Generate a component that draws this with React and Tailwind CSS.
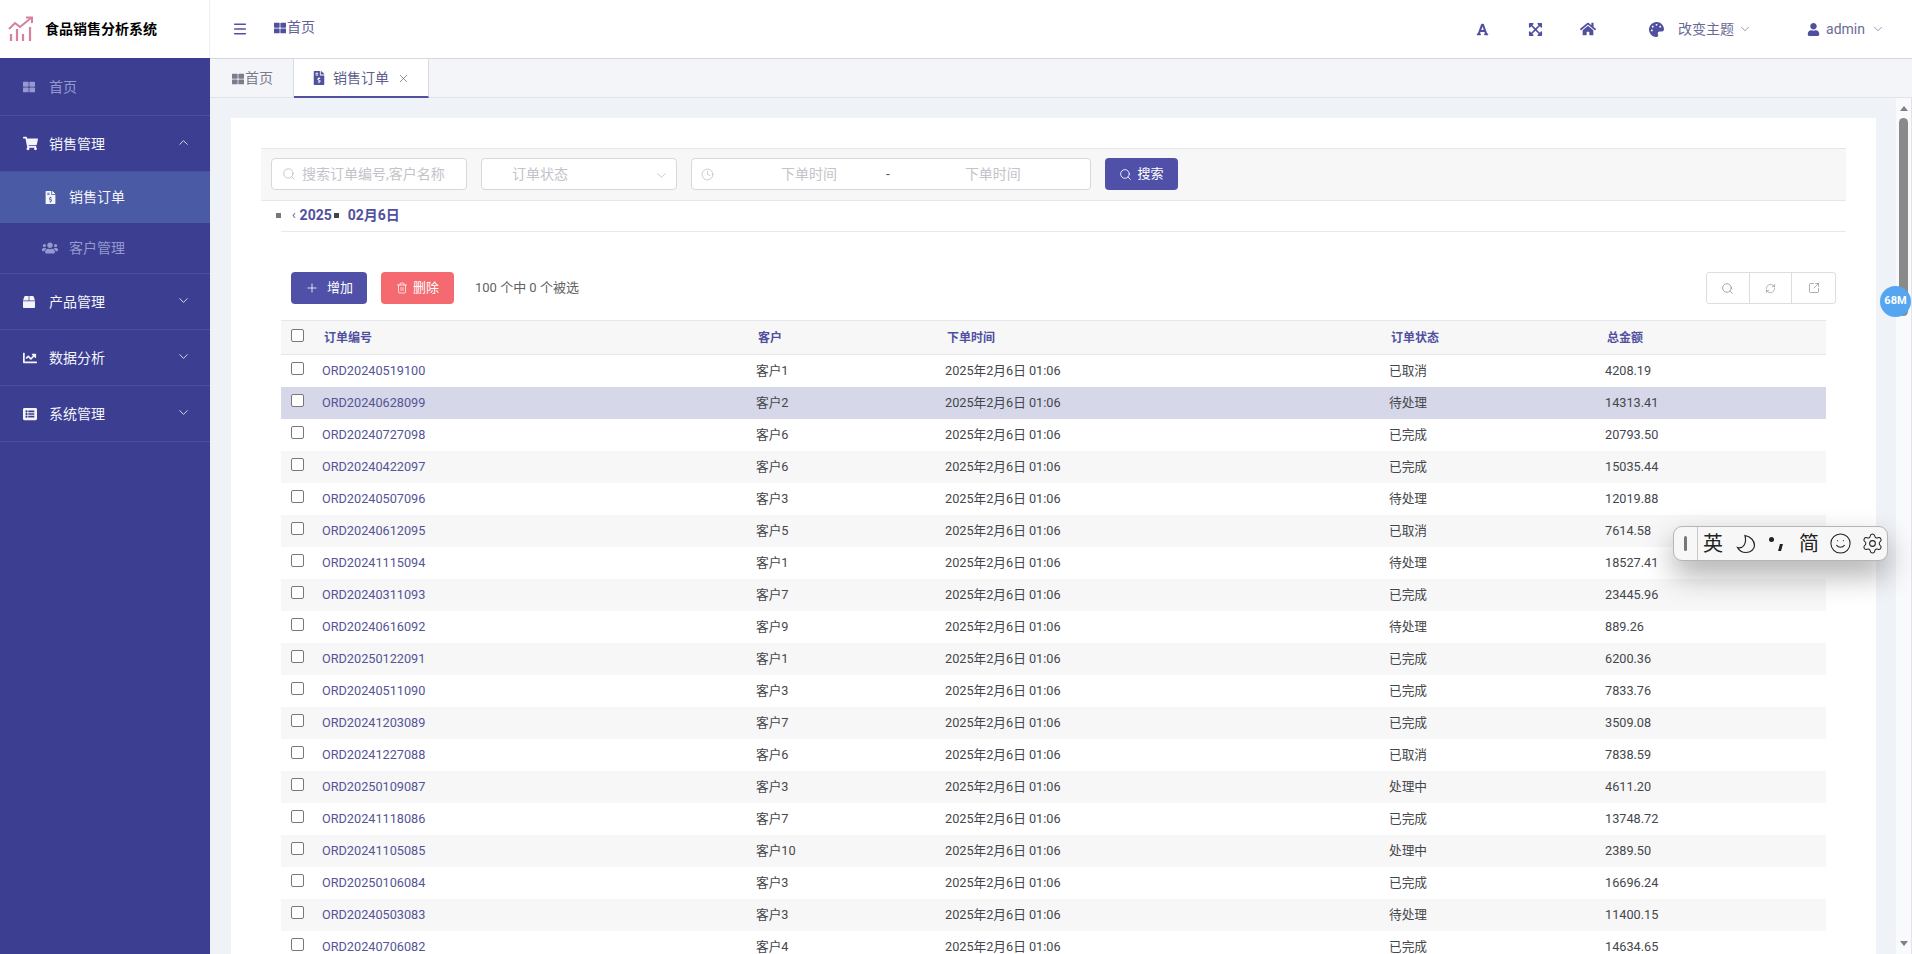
import React from "react";
import { FaThLarge, FaShoppingCart, FaFileInvoiceDollar, FaUsers, FaBox, FaChartLine, FaListAlt, FaFont, FaExpandArrowsAlt, FaHome, FaPalette, FaUser } from "react-icons/fa";
import { ChevronDown, ChevronUp, Search, Clock, X, Plus, Trash2, RefreshCw, SquareArrowOutUpRight, Menu, Smile, Settings } from "lucide-react";

const rows = [
  ["ORD20240519100", "客户1", "已取消", "4208.19"],
  ["ORD20240628099", "客户2", "待处理", "14313.41"],
  ["ORD20240727098", "客户6", "已完成", "20793.50"],
  ["ORD20240422097", "客户6", "已完成", "15035.44"],
  ["ORD20240507096", "客户3", "待处理", "12019.88"],
  ["ORD20240612095", "客户5", "已取消", "7614.58"],
  ["ORD20241115094", "客户1", "待处理", "18527.41"],
  ["ORD20240311093", "客户7", "已完成", "23445.96"],
  ["ORD20240616092", "客户9", "待处理", "889.26"],
  ["ORD20250122091", "客户1", "已完成", "6200.36"],
  ["ORD20240511090", "客户3", "已完成", "7833.76"],
  ["ORD20241203089", "客户7", "已完成", "3509.08"],
  ["ORD20241227088", "客户6", "已取消", "7838.59"],
  ["ORD20250109087", "客户3", "处理中", "4611.20"],
  ["ORD20241118086", "客户7", "已完成", "13748.72"],
  ["ORD20241105085", "客户10", "处理中", "2389.50"],
  ["ORD20250106084", "客户3", "已完成", "16696.24"],
  ["ORD20240503083", "客户3", "待处理", "11400.15"],
  ["ORD20240706082", "客户4", "已完成", "14634.65"],
];

const font = "font-['Roboto','Noto_Sans_CJK_SC',sans-serif]";

function Logo() {
  return (
    <svg width="26" height="26" viewBox="0 0 26 26" fill="none" stroke="#d77f9f" strokeWidth="2">
      <path d="M1 13 L7 7 L12 11 L23 2" />
      <path d="M18 1.5 H24 V7" />
      <path d="M3 25 V18 M9 25 V13 M15 25 V18 M22 25 V11" strokeWidth="2.2" />
    </svg>
  );
}

function SideItem({ icon: Icon, label, open, bright, iconSize = 14, hasArrow = true, h = "h-[56px]" }) {
  return (
    <div className={`${h} flex items-center pl-[23px] pr-[19px] border-b border-[#4b4fa3] ${bright ? "text-[#f4f4fb]" : "text-[#9699cf]"}`}>
      <span className="w-[26px] flex-none flex items-center">
        <Icon size={iconSize} />
      </span>
      <span className="text-[14px] flex-1 pt-[2px]">{label}</span>
      {hasArrow && (open ? <ChevronUp size={15} strokeWidth={1.6} className="text-[#d5d6ee] -mt-[2px]" /> : <ChevronDown size={15} strokeWidth={1.6} className="text-[#d5d6ee] -mt-[2px]" />)}
    </div>
  );
}

function Sidebar() {
  return (
    <aside className="w-[210px] flex-none flex flex-col">
      <div className="h-[58px] flex-none bg-white flex items-center pl-[8px] border-r border-[#eeeeee]">
        <Logo />
        <span className="ml-[11px] text-[14px] font-bold text-black">食品销售分析系统</span>
      </div>
      <nav className="flex-1 bg-[#3c3e92]">
        <SideItem icon={FaThLarge} label="首页" hasArrow={false} iconSize={12} h="h-[58px]" />
        <SideItem icon={FaShoppingCart} label="销售管理" open bright iconSize={15} />
        <div className="h-[51px] bg-[#4a5aa5] pl-[44px] flex items-center text-[#f4f4fb]">
          <FaFileInvoiceDollar size={13} />
          <span className="ml-[12px] text-[14px]">销售订单</span>
        </div>
        <div className="h-[51px] pl-[42px] flex items-center text-[#9699cf] border-b border-[#4b4fa3]">
          <FaUsers size={16} />
          <span className="ml-[11px] text-[14px]">客户管理</span>
        </div>
        <SideItem icon={FaBox} label="产品管理" bright iconSize={12} />
        <SideItem icon={FaChartLine} label="数据分析" bright />
        <SideItem icon={FaListAlt} label="系统管理" bright />
      </nav>
    </aside>
  );
}

function Header() {
  return (
    <header className="h-[59px] flex-none bg-white border-b border-[#d6d8e0] flex items-center text-[#50509f]">
      <Menu size={16} className="ml-[22px]" strokeWidth={2.2} />
      <div className="ml-[26px] flex items-center -mt-[3px]">
        <FaThLarge size={12} />
        <span className="ml-[1px] text-[14px] text-[#62629a]">首页</span>
      </div>
      <div className="ml-auto flex items-center">
        <FaFont size={13} />
        <FaExpandArrowsAlt size={15} className="ml-[39px]" />
        <FaHome size={16} className="ml-[37px]" />
        <FaPalette size={15} className="ml-[53px]" />
        <span className="ml-[14px] text-[14px] text-[#6a6a96]">改变主题</span>
        <ChevronDown size={14} strokeWidth={1.2} className="ml-[4px] text-[#6a6a96]" />
        <FaUser size={13} className="ml-[55px]" />
        <span className="ml-[6px] text-[14px] text-[#6a6a96]">admin</span>
        <ChevronDown size={14} strokeWidth={1.2} className="ml-[6px] mr-[27px] text-[#6a6a96]" />
      </div>
    </header>
  );
}

function Tabs() {
  return (
    <div className="h-[39px] flex-none bg-[#f3f5f9] border-b border-[#e0e4ea] flex">
      <div className="w-[84px] flex items-center pl-[22px] pt-[1px] text-[#7c7c8c] border-r border-[#d8dbe4]">
        <FaThLarge size={12} />
        <span className="ml-[1px] text-[14px]">首页</span>
      </div>
      <div className="w-[135px] h-[39px] bg-white flex items-center pl-[18px] pt-[1px] border-r border-b-2 border-r-[#d8dbe4] border-b-[#50509f] text-[#50509f]">
        <FaFileInvoiceDollar size={14} />
        <span className="ml-[7px] text-[14px] text-[#5d5d8e]">销售订单</span>
        <X size={13} strokeWidth={1.2} className="ml-[8px] text-[#55556a]" />
      </div>
    </div>
  );
}

function Field({ w, children }) {
  return <div className={`${w} h-[32px] bg-white border border-[#d6d8dd] rounded-[4px] flex items-center text-[14px] text-[#c2c4c9]`}>{children}</div>;
}

function Toolbar() {
  return (
    <div className="h-[53px] border-y border-[#e6e7ea] bg-[#f7f7f8] flex items-center pl-[10px] pb-[1px] gap-[14px]">
      <Field w="w-[196px]">
        <Search size={14} strokeWidth={1.3} className="ml-[10px] text-[#b5b7bd]" />
        <span className="ml-[6px]">搜索订单编号,客户名称</span>
      </Field>
      <Field w="w-[196px]">
        <span className="ml-[30px]">订单状态</span>
        <ChevronDown size={15} strokeWidth={1.2} className="ml-auto mr-[7px] mt-[3px] text-[#b5b7bd]" />
      </Field>
      <Field w="w-[400px]">
        <Clock size={13} strokeWidth={1.3} className="ml-[9px] text-[#b5b7bd]" />
        <span className="ml-[67px]">下单时间</span>
        <span className="ml-[49px] text-[#606266]">-</span>
        <span className="ml-[75px]">下单时间</span>
      </Field>
      <button className="w-[73px] h-[32px] rounded-[4px] bg-[#5050a8] text-white text-[13px] flex items-center justify-center">
        <Search size={13} strokeWidth={1.6} />
        <span className="ml-[5px]">搜索</span>
      </button>
    </div>
  );
}

function Crumbs() {
  return (
    <div className="relative h-[31px] ml-[20px] border-b border-[#e8e9ec] flex items-center pb-[2px]">
      <span className="w-[5px] h-[5px] -ml-[5px] bg-[#77777d]" />
      <span className="ml-[11px] text-[12px] text-[#50509f]">‹</span>
      <span className="ml-[4px] text-[14px] font-bold text-[#50509f]">2025</span>
      <span className="ml-[2px] w-[5px] h-[5px] bg-[#444]" />
      <span className="ml-[9px] text-[14px] font-bold text-[#50509f]">02月6日</span>
    </div>
  );
}

function Actions() {
  return (
    <div className="mt-[40px] pl-[30px] pr-[10px] flex items-center">
      <button className="w-[76px] h-[32px] rounded-[4px] bg-[#5050a8] text-white text-[13px] flex items-center justify-center">
        <Plus size={14} strokeWidth={1.4} />
        <span className="ml-[8px]">增加</span>
      </button>
      <button className="ml-[14px] w-[73px] h-[32px] rounded-[4px] bg-[#f46a70] text-white text-[13px] flex items-center justify-center">
        <Trash2 size={12} strokeWidth={1.5} />
        <span className="ml-[5px]">删除</span>
      </button>
      <span className="ml-[21px] text-[13px] text-[#606266]">100 个中 0 个被选</span>
      <div className="ml-auto w-[130px] h-[32px] border border-[#dcdee3] rounded-[3px] grid grid-cols-3 divide-x divide-[#dcdee3] text-[#77797f]">
        <span className="flex items-center justify-center"><Search size={13} strokeWidth={1.2} /></span>
        <span className="flex items-center justify-center"><RefreshCw size={11} strokeWidth={1.2} /></span>
        <span className="flex items-center justify-center"><SquareArrowOutUpRight size={12} strokeWidth={1.2} /></span>
      </div>
    </div>
  );
}

function Check() {
  return <span className="block w-[13px] h-[13px] bg-white border border-[#77777d] rounded-[2px]" />;
}

function Table() {
  const th = "text-left font-bold text-[12px] text-[#50509f] pl-[10px] pr-[8px]";
  const td = "px-[8px] text-[12.7px] text-[#44464c] truncate";
  return (
    <table className="mt-[16px] ml-[20px] w-[1545px] table-fixed border-collapse">
      <colgroup>
        <col className="w-[33px]" />
        <col className="w-[434px]" />
        <col className="w-[189px]" />
        <col className="w-[444px]" />
        <col className="w-[216px]" />
        <col className="w-[229px]" />
      </colgroup>
      <thead>
        <tr className="h-[34px] bg-[#f7f7f8] border-y border-[#e6e7ea]">
          <th className="pl-[10px] pb-[4px]"><Check /></th>
          <th className={th}>订单编号</th>
          <th className={th}>客户</th>
          <th className={th}>下单时间</th>
          <th className={th}>订单状态</th>
          <th className={th}>总金额</th>
        </tr>
      </thead>
      <tbody>
        {rows.map((r, i) => (
          <tr key={r[0]} className={`h-[32px] ${i === 1 ? "bg-[#d6d7e8]" : i % 2 === 1 ? "bg-[#f7f7f8]" : "bg-white"}`}>
            <td className="pl-[10px] pb-[5px]"><Check /></td>
            <td className="px-[8px] text-[12.7px] text-[#545496]">{r[0]}</td>
            <td className={td}>{r[1]}</td>
            <td className={td}>2025年2月6日 01:06</td>
            <td className={td}>{r[2]}</td>
            <td className={td}>{r[3]}</td>
          </tr>
        ))}
      </tbody>
    </table>
  );
}

function Scrollbar() {
  return (
    <div className="w-[16px] flex-none bg-[#f9fafc] border-r border-[#e4e4e8] flex flex-col items-center overflow-hidden">
      <span className="mt-[8px] w-0 h-0 border-x-[4px] border-x-transparent border-b-[5px] border-b-[#808080]" />
      <span className="mt-[7px] w-[9px] h-[198px] rounded-full bg-[#8a8a8a]" />
      <span className="mt-auto mb-[8px] w-0 h-0 border-x-[4px] border-x-transparent border-t-[5px] border-t-[#808080]" />
    </div>
  );
}

function Ime() {
  return (
    <div className={`absolute left-[1673px] top-[526px] w-[215px] h-[35px] bg-[#f7f7f7] border border-[#b5b5b5] rounded-[9px] shadow-[0_14px_30px_rgba(0,0,0,0.32)] flex items-center text-[#222] ${font}`}>
      <span className="w-[24px] h-full flex-none border-r border-[#c8c8c8] flex items-center justify-center">
        <span className="w-[3px] h-[15px] bg-[#777] rounded-sm" />
      </span>
      <span className="ml-[5px] text-[20px] leading-none">英</span>
      <svg width="20" height="20" viewBox="0 0 20 20" fill="none" stroke="#222" strokeWidth="1.2" className="ml-[13px]">
        <path d="M9 1.5 C14.5 2.5 18.5 6.5 18.5 11.5 C18.5 15.5 14.5 18.5 10 18.5 C6.5 18.5 3 16.5 1.5 13.5 C7 15 11 10 9 1.5 Z" />
      </svg>
      <span className="ml-[13px] w-[16px] h-[16px] flex-none relative">
        <span className="absolute left-0 top-[1px] w-[5px] h-[5px] rounded-full bg-[#222]" />
        <span className="absolute left-[10px] top-[8px] w-[3px] h-[7px] bg-[#222] skew-x-[-15deg]" />
      </span>
      <span className="ml-[14px] text-[20px] leading-none">简</span>
      <Smile size={23} strokeWidth={1.1} className="ml-[10px] flex-none" />
      <Settings size={23} strokeWidth={1.1} className="ml-[9px] flex-none" />
    </div>
  );
}

export default function App() {
  return (
    <div className={`relative w-[1912px] h-[954px] flex overflow-hidden bg-white ${font}`}>
      <Sidebar />
      <div className="flex-1 min-w-0 flex flex-col">
        <Header />
        <Tabs />
        <div className="flex-1 min-h-0 flex bg-[#eff2f6]">
          <main className="flex-1 min-w-0 pl-[21px] pr-[20px] pt-[20px] overflow-hidden">
            <div className="bg-white pt-[30px] pb-[40px] pl-[30px] pr-[30px] w-[1645px]">
              <Toolbar />
              <Crumbs />
              <Actions />
              <Table />
            </div>
          </main>
          <Scrollbar />
        </div>
      </div>
      <div className="absolute left-[1880px] top-[286px] w-[31px] h-[31px] rounded-full bg-[#55a5f0] text-white text-[11px] font-bold flex items-center justify-center">68M</div>
      <Ime />
    </div>
  );
}
